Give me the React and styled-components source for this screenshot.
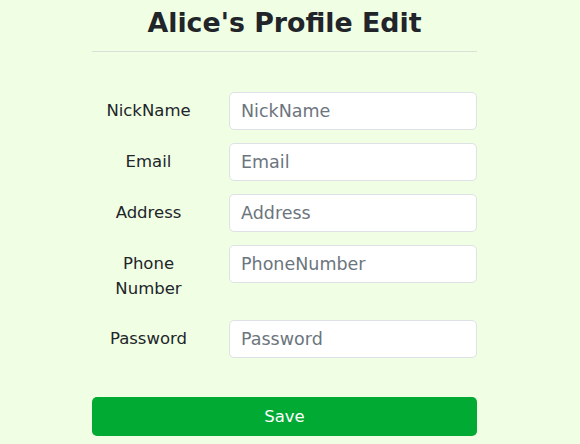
import styled, { createGlobalStyle } from "styled-components";

const GlobalStyle = createGlobalStyle`
  html, body {
    margin: 0;
    background: #f0fee4;
  }
  body {
    font-family: "DejaVu Sans", Verdana, sans-serif;
    color: #212529;
  }
  * {
    box-sizing: border-box;
  }
`;

const Page = styled.div`
  display: flex;
  justify-content: center;
  padding: 6px 11px 0 0;
`;

const Container = styled.div`
  width: 385px;
`;

const Title = styled.h2`
  margin: 0;
  font-size: 26.8px;
  line-height: 34px;
  font-weight: bold;
  text-align: center;
`;

const Divider = styled.hr`
  margin: 11px 0 40px;
  border: 0;
  border-top: 1px solid #dcdfd8;
`;

const Form = styled.form`
  display: flex;
  flex-direction: column;
  gap: 13px;
`;

const Row = styled.div`
  display: grid;
  grid-template-columns: 113px 1fr;
  column-gap: 24px;
  align-items: start;
`;

const Label = styled.label`
  padding: 6px 0;
  font-size: 16.5px;
  line-height: 25px;
  text-align: center;
`;

const Input = styled.input`
  height: 38px;
  padding: 6px 11px;
  font-family: inherit;
  font-size: 17.5px;
  color: #212529;
  background: #fff;
  border: 1px solid #dee2e6;
  border-radius: 5px;
  outline: none;

  &::placeholder {
    color: #6c757d;
  }
`;

const SaveButton = styled.button`
  margin-top: 26px;
  width: 100%;
  height: 39px;
  border: 0;
  border-radius: 5px;
  background: #00aa33;
  color: #fff;
  font-family: inherit;
  font-size: 16.5px;
`;

const fields = [
  { label: "NickName", placeholder: "NickName", type: "text" },
  { label: "Email", placeholder: "Email", type: "email" },
  { label: "Address", placeholder: "Address", type: "text" },
  { label: "Phone Number", placeholder: "PhoneNumber", type: "tel" },
  { label: "Password", placeholder: "Password", type: "password" },
];

const App = () => {
  return (
    <>
      <GlobalStyle />
      <Page>
        <Container>
          <Title>Alice's Profile Edit</Title>
          <Divider />
          <Form onSubmit={(e) => e.preventDefault()}>
            {fields.map((f) => (
              <Row key={f.label}>
                <Label htmlFor={f.placeholder}>{f.label}</Label>
                <Input id={f.placeholder} type={f.type} placeholder={f.placeholder} />
              </Row>
            ))}
            <SaveButton type="submit">Save</SaveButton>
          </Form>
        </Container>
      </Page>
    </>
  );
};

export default App;
